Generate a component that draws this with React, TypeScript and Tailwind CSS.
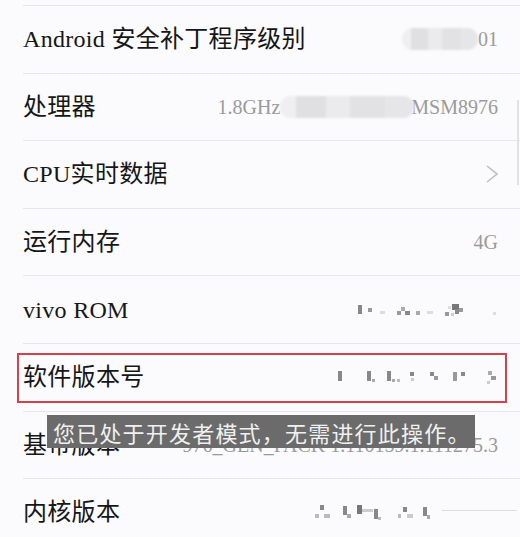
import React from 'react'

type Dot = [number, number, number, number, string]

const romDots: Dot[] = [
  [3, 2, 4, 9, '#888'], [13, 5, 4, 4, '#999'], [25, 8, 5, 3, '#ddd'],
  [42, 8, 4, 4, '#999'], [46, 4, 4, 4, '#aaa'], [50, 8, 5, 4, '#888'],
  [61, 8, 4, 4, '#aaa'], [72, 8, 6, 3, '#ddd'],
  [90, 9, 4, 4, '#999'], [93, 3, 3, 3, '#ddd'], [97, 1, 7, 6, '#777'],
  [100, 6, 4, 5, '#888'], [104, 5, 4, 4, '#999'], [96, 10, 3, 3, '#ccc'],
  [138, 9, 3, 3, '#ddd'],
]

const swDots: Dot[] = [
  [3, 2, 4, 10, '#888'], [32, 2, 4, 10, '#888'], [37, 10, 3, 3, '#aaa'],
  [52, 2, 4, 10, '#888'], [57, 10, 3, 3, '#aaa'], [62, 10, 3, 3, '#bbb'],
  [75, 3, 4, 4, '#888'], [76, 9, 3, 3, '#ccc'],
  [95, 3, 4, 4, '#888'], [99, 7, 4, 4, '#999'],
  [118, 3, 4, 9, '#999'], [126, 3, 4, 4, '#888'],
  [153, 2, 4, 4, '#aaa'], [156, 7, 5, 4, '#999'], [152, 12, 3, 3, '#ccc'],
]

const kernelDots: Dot[] = [
  [3, 11, 4, 4, '#bbb'], [8, 2, 4, 5, '#888'], [12, 11, 6, 4, '#bbb'],
  [31, 3, 4, 9, '#888'], [35, 11, 4, 4, '#aaa'],
  [45, 2, 5, 9, '#777'], [50, 6, 11, 3, '#ccc'], [62, 6, 4, 10, '#888'], [66, 14, 3, 3, '#bbb'],
  [86, 11, 3, 4, '#bbb'], [91, 4, 4, 5, '#888'], [95, 11, 6, 4, '#ccc'],
  [111, 4, 4, 9, '#888'], [115, 12, 3, 4, '#aaa'],
  [130, 7, 75, 1, '#ddd'],
]

function Pixels({ dots, w, h, id }: { dots: Dot[]; w: number; h: number; id: string }) {
  return (
    <svg width={w} height={h} viewBox={`0 0 ${w} ${h}`}>
      <defs>
        <filter id={id}>
          <feGaussianBlur stdDeviation="0.6" />
        </filter>
      </defs>
      <g filter={`url(#${id})`}>
        {dots.map(([x, y, dw, dh, c], i) => (
          <rect key={i} x={x} y={y} width={dw} height={dh} fill={c} />
        ))}
      </g>
    </svg>
  )
}

function Smudge({ w }: { w: number }) {
  return (
    <div className="flex h-[22px] overflow-hidden rounded-full bg-[#ececee] blur-[1px]" style={{ width: w }}>
      <div className="w-[12%] bg-[#efeff1]" />
      <div className="w-[22%] bg-[#e0e0e2]" />
      <div className="w-[18%] bg-[#ebebed]" />
      <div className="w-[26%] bg-[#e2e2e4]" />
      <div className="flex-1 bg-[#e6e6e8]" />
    </div>
  )
}

function Row({ label, children }: { label: string; children?: React.ReactNode }) {
  return (
    <div className="flex h-[67.6px] items-center justify-between border-b border-[#e6e5e9] pr-[22px]">
      <span className="text-[24px] leading-none tracking-[0.3px] text-[#161616]">{label}</span>
      <div className="flex items-center text-[20px] leading-none text-[#9a9a9a]">{children}</div>
    </div>
  )
}

export default function App() {
  return (
    <div className="relative h-[537px] w-[520px] overflow-hidden bg-[#fbfafc] font-['Liberation_Serif','Noto_Sans_CJK_SC',serif]">
      <div className="ml-[23px]">
        <div className="h-[6px] border-b border-[#e6e5e9]" />
        <Row label="Android 安全补丁程序级别">
          <Smudge w={76} />
          <span>01</span>
        </Row>
        <Row label="处理器">
          <span>1.8GHz</span>
          <Smudge w={134} />
          <span className="-ml-[3px]">MSM8976</span>
        </Row>
        <Row label="CPU实时数据">
          <svg width="12" height="18" viewBox="0 0 12 18" fill="none">
            <polyline points="1,1 11,9 1,17" stroke="#bdbdbd" strokeWidth="1.5" />
          </svg>
        </Row>
        <Row label="运行内存">
          <span>4G</span>
        </Row>
        <Row label="vivo ROM">
          <Pixels dots={romDots} w={143} h={14} id="p1" />
        </Row>
        <Row label="软件版本号">
          <Pixels dots={swDots} w={163} h={16} id="p2" />
        </Row>
        <Row label="基带版本">
          <span>976_GEN_PACK 1.110159.1.111275.3</span>
        </Row>
        <Row label="内核版本">
          <div className="-mr-[22px]">
            <Pixels dots={kernelDots} w={208} h={18} id="p3" />
          </div>
        </Row>
      </div>

      {/* highlight box */}
      <div className="absolute left-[17px] top-[353px] h-[50px] w-[490px] border-2 border-[#d4434c]" />

      {/* toast */}
      <div className="absolute left-[47px] top-[415px] flex h-[33px] w-[428px] items-center whitespace-nowrap bg-[#6b6b6b] pl-[6px] text-[22px] leading-none tracking-[1.2px] text-[#f0f0f0] font-['Noto_Sans_CJK_SC',sans-serif]">
        您已处于开发者模式，无需进行此操作。
      </div>

      {/* scrollbar */}
      <div className="absolute right-[1px] top-[100px] h-[85px] w-[2px] bg-[#e2e2e2]" />
    </div>
  )
}
